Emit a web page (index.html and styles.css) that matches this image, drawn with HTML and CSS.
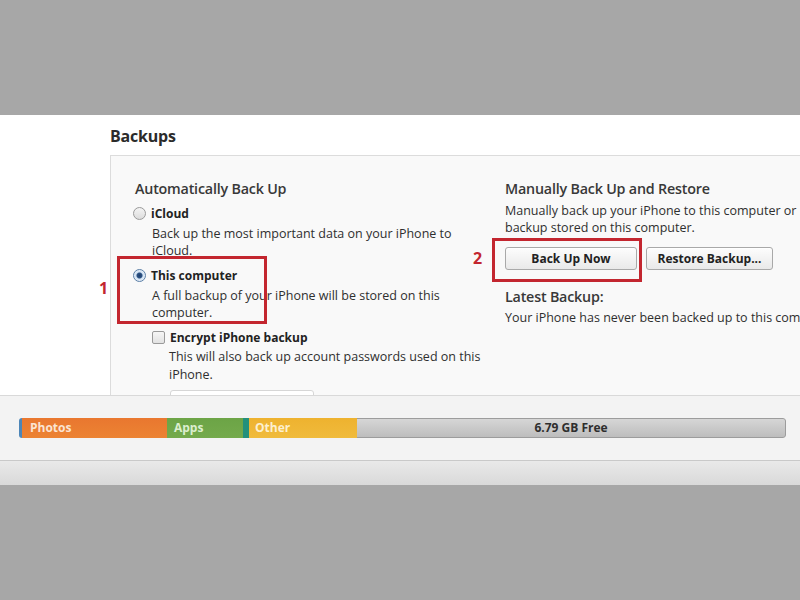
FILE: index.html
```html
<!DOCTYPE html>
<html>
<head>
<meta charset="utf-8">
<link rel="stylesheet" href="styles.css">
</head>
<body>
<div class="top"></div>
<div class="panel">
  <h2 class="title">Backups</h2>
  <div class="box">
    <div class="col col-left">
      <h3 class="heading">Automatically Back Up</h3>
      <div class="option opt-icloud">
        <span class="radio"></span><span class="opt-label">iCloud</span>
      </div>
      <p class="desc">Back up the most important data on your iPhone to<br>iCloud.</p>
      <div class="option opt-computer">
        <span class="radio checked"></span><span class="opt-label">This computer</span>
        <span class="mark mark-1"></span>
        <span class="num num-1">1</span>
      </div>
      <p class="desc">A full backup of your iPhone will be stored on this<br>computer.</p>
      <div class="option opt-encrypt">
        <span class="check"></span><span class="opt-label">Encrypt iPhone backup</span>
      </div>
      <p class="desc desc-encrypt">This will also back up account passwords used on this<br>iPhone.</p>
      <div class="pwd-btn"></div>
    </div>
    <div class="col col-right">
      <h3 class="heading">Manually Back Up and Restore</h3>
      <p class="desc desc-manual"><span class="line">Manually back up your iPhone to this computer or</span><span class="line">backup stored on this computer.</span></p>
      <div class="buttons">
        <button class="btn btn-now">Back Up Now
          <span class="mark mark-2"></span>
          <span class="num num-2">2</span>
        </button>
        <button class="btn btn-restore">Restore Backup...</button>
      </div>
      <h3 class="heading heading-latest">Latest Backup:</h3>
      <p class="desc"><span class="line">Your iPhone has never been backed up to this computer.</span></p>
    </div>
  </div>
</div>
<div class="storage">
  <div class="bar">
    <div class="seg seg-edge"></div>
    <div class="seg seg-photos">Photos</div>
    <div class="seg seg-apps">Apps</div>
    <div class="seg seg-teal"></div>
    <div class="seg seg-other">Other</div>
    <div class="seg seg-free">6.79 GB Free</div>
  </div>
</div>
<div class="strip"></div>
<div class="bottom"></div>
</body>
</html>
```
FILE: styles.css
```css
html, body {
  margin: 0;
  padding: 0;
  width: 800px;
  height: 600px;
  overflow: hidden;
  background: #a7a7a7;
  font-family: "Open Sans", "Liberation Sans", sans-serif;
  color: #333;
}

.top {
  height: 115px;
  background: #a7a7a7;
}

.panel {
  height: 280px;
  background: #fff;
  padding-left: 110px;
  overflow: hidden;
  box-sizing: border-box;
}

.title {
  margin: 0;
  padding-top: 11px;
  height: 29px;
  font-size: 16px;
  line-height: 20px;
  font-weight: 700;
  color: #2b2b2b;
  letter-spacing: -0.2px;
}

.box {
  width: 760px;
  height: 260px;
  border-top: 1px solid #dcdcdc;
  border-left: 1px solid #dcdcdc;
  background: #f9f9f9;
  display: grid;
  grid-template-columns: 370px 1fr;
  padding-left: 24px;
  padding-top: 24px;
  box-sizing: border-box;
}

.col {
  display: flex;
  flex-direction: column;
  align-items: flex-start;
}

.heading {
  margin: 0;
  font-size: 14.3px;
  line-height: 18px;
  font-weight: 600;
  color: #383838;
  letter-spacing: -0.2px;
  white-space: nowrap;
}

.option {
  position: relative;
  display: flex;
  align-items: center;
  height: 17px;
  font-size: 12px;
  font-weight: 700;
  color: #222;
}

.opt-icloud { margin-top: 7px; margin-left: -2px; }
.opt-computer { margin-top: 8px; margin-left: -2px; }
.opt-encrypt { margin-top: 8px; margin-left: 17px; }

.radio {
  width: 11px;
  height: 11px;
  border-radius: 50%;
  border: 1px solid #9a9a9a;
  background: linear-gradient(#f4f4f4, #dcdcdc);
  margin-right: 5px;
  box-sizing: content-box;
  position: relative;
}

.radio.checked {
  border-color: #5b7fa6;
  background: radial-gradient(circle, #1d3f6e 0, #2c5283 2.5px, #cfe0f2 3.5px, #eaf2fa 6px);
}

.check {
  width: 11px;
  height: 11px;
  border: 1px solid #9a9a9a;
  border-radius: 2px;
  background: linear-gradient(#f6f6f6, #e2e2e2);
  margin-right: 5px;
}

.opt-label {
  white-space: nowrap;
}

.desc {
  margin: 3px 0 0 17px;
  font-size: 12.5px;
  line-height: 17px;
  color: #2f2f2f;
  white-space: nowrap;
}

.desc-encrypt {
  margin: 2px 0 0 34px;
  line-height: 18px;
}

.pwd-btn {
  margin: 6px 0 0 35px;
  width: 142px;
  height: 20px;
  border: 1px solid #d6d6d6;
  border-radius: 3px;
  background: #fff;
}

.col-right .desc {
  margin-left: 0;
}

.line {
  display: block;
}

.desc-manual {
  margin-top: 4px !important;
}

.buttons {
  display: flex;
  gap: 9px;
  margin-top: 11px;
}

.btn {
  position: relative;
  height: 23px;
  border: 1px solid #a9a9a9;
  border-radius: 3px;
  background: linear-gradient(#fdfdfd, #e9e9e9);
  font-family: inherit;
  font-size: 12px;
  font-weight: 700;
  color: #222;
  padding: 0;
  box-shadow: inset 0 1px 0 #fff;
}

.btn-now { width: 132px; }
.btn-restore { width: 127px; }

.heading-latest {
  margin-top: 18px;
}

.mark {
  position: absolute;
  border: 3px solid #c3262f;
  box-sizing: border-box;
  pointer-events: none;
}

.mark-1 {
  left: -16px;
  top: -11px;
  width: 150px;
  height: 68px;
}

.mark-2 {
  left: -14px;
  top: -10px;
  width: 150px;
  height: 44px;
}

.num {
  position: absolute;
  color: #c3262f;
  font-size: 16px;
  font-weight: 700;
  line-height: 18px;
}

.num-1 {
  left: -34px;
  top: 12px;
}

.num-2 {
  left: -33px;
  top: 1px;
}

.storage {
  height: 66px;
  background: #f3f3f3;
  border-top: 1px solid #d9d9d9;
  border-bottom: 1px solid #c9c9c9;
  box-sizing: border-box;
  padding: 22px 14px 0 19px;
}

.bar {
  display: flex;
  height: 20px;
  border-radius: 3px;
  overflow: hidden;
  font-size: 12px;
  font-weight: 700;
  line-height: 20px;
}

.seg {
  height: 20px;
  box-sizing: border-box;
}

.seg-edge { width: 3px; background: #4d86b8; }
.seg-photos {
  width: 145px;
  background: linear-gradient(#e9772f, #ec8333);
  color: #fbe4d2;
  padding-left: 8px;
}
.seg-apps {
  width: 76px;
  background: linear-gradient(#6ca446, #74aa4c);
  color: #dcefcf;
  padding-left: 7px;
}
.seg-teal { width: 6px; background: #24907b; }
.seg-other {
  width: 108px;
  background: linear-gradient(#eeb22f, #f0bb3c);
  color: #fdf0cf;
  padding-left: 6px;
}
.seg-free {
  flex: 1;
  background: linear-gradient(#d6d6d6, #bdbdbd);
  border: 1px solid #9c9c9c;
  border-left: none;
  border-radius: 0 3px 3px 0;
  color: #2e2e2e;
  text-align: center;
  line-height: 18px;
  padding-right: 0;
}

.strip {
  height: 24px;
  background: linear-gradient(#e9e9e9, #d9d9d9);
}

.bottom {
  height: 115px;
  background: #a7a7a7;
}
```
